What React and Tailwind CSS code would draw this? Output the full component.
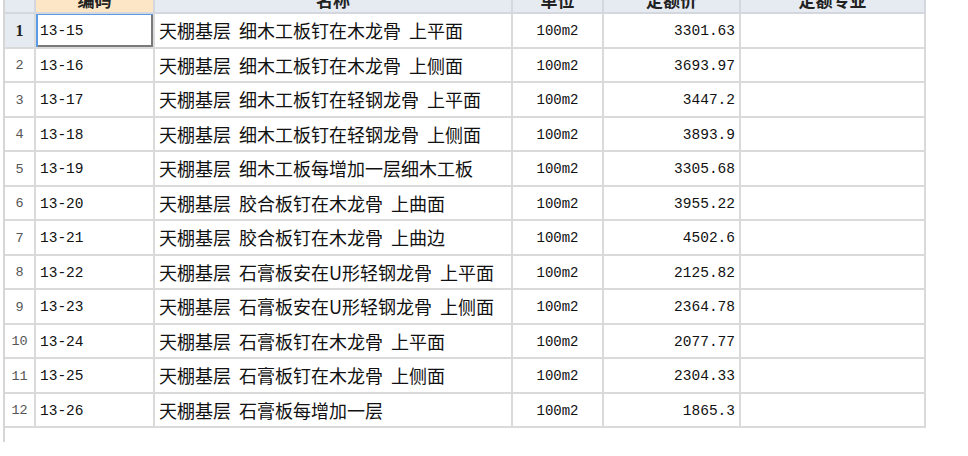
import React from "react";

const rows = [
  ["13-15", "天棚基层 细木工板钉在木龙骨 上平面", "100m2", "3301.63"],
  ["13-16", "天棚基层 细木工板钉在木龙骨 上侧面", "100m2", "3693.97"],
  ["13-17", "天棚基层 细木工板钉在轻钢龙骨 上平面", "100m2", "3447.2"],
  ["13-18", "天棚基层 细木工板钉在轻钢龙骨 上侧面", "100m2", "3893.9"],
  ["13-19", "天棚基层 细木工板每增加一层细木工板", "100m2", "3305.68"],
  ["13-20", "天棚基层 胶合板钉在木龙骨 上曲面", "100m2", "3955.22"],
  ["13-21", "天棚基层 胶合板钉在木龙骨 上曲边", "100m2", "4502.6"],
  ["13-22", "天棚基层 石膏板安在U形轻钢龙骨 上平面", "100m2", "2125.82"],
  ["13-23", "天棚基层 石膏板安在U形轻钢龙骨 上侧面", "100m2", "2364.78"],
  ["13-24", "天棚基层 石膏板钉在木龙骨 上平面", "100m2", "2077.77"],
  ["13-25", "天棚基层 石膏板钉在木龙骨 上侧面", "100m2", "2304.33"],
  ["13-26", "天棚基层 石膏板每增加一层", "100m2", "1865.3"],
];

const cjk = { fontFamily: '"Noto Sans CJK SC", sans-serif' };
const mono = { fontFamily: '"Liberation Mono", monospace' };

const App = () => {
  return (
    <div className="w-[968px] h-[456px] overflow-hidden bg-white pl-[3px]">
      <div className="h-full border-l-2 border-[#d6d6d6]">
        <div className="w-[921px] -mt-[14px]">
          {/* header, top half is scrolled out of view */}
          <div className="flex h-[28px] border-b-2 border-[#d4d8de] font-bold text-[17px] leading-none text-[#222]" style={cjk}>
            <div className="w-[31px] shrink-0 bg-[#e6ebf2] border-r-2 border-[#d4d8de]"></div>
            <div className="w-[119px] shrink-0 bg-[#fde6c6] border-r-2 border-[#d4d8de] flex items-center justify-center">编码</div>
            <div className="w-[358px] shrink-0 bg-[#e6ebf2] border-r-2 border-[#d4d8de] flex items-center justify-center">名称</div>
            <div className="w-[91px] shrink-0 bg-[#e6ebf2] border-r-2 border-[#d4d8de] flex items-center justify-center">单位</div>
            <div className="w-[137px] shrink-0 bg-[#e6ebf2] border-r-2 border-[#d4d8de] flex items-center justify-center">定额价</div>
            <div className="w-[185px] shrink-0 bg-[#e6ebf2] border-r-2 border-[#d4d8de] flex items-center justify-center">定额专业</div>
          </div>

          {rows.map((r, i) => (
            <div key={r[0]} className="flex h-[34.5px] border-b-2 border-[#dadada] text-[#111] leading-none">
              <div
                className={`w-[31px] shrink-0 border-r-2 border-[#dadada] flex items-center justify-center pt-[2px] ${
                  i === 0 ? "bg-[#e6ebf2] font-bold text-[#222] text-[16px]" : "text-[#555] text-[13.5px]"
                }`}
                style={i === 0 ? { fontFamily: '"Liberation Serif", serif' } : mono}
              >
                {i + 1}
              </div>
              <div
                className={`w-[119px] shrink-0 border-r-2 border-[#dadada] flex items-center pl-[4px] pt-[2px] text-[14.5px] ${
                  i === 0 ? "shadow-[inset_2px_1px_0_#5b9be6,inset_-2px_-2px_0_#7a7a7a]" : ""
                }`}
                style={mono}
              >
                {r[0]}
              </div>
              <div
                className="w-[358px] shrink-0 border-r-2 border-[#dadada] flex items-center pl-[4px] text-[18px] whitespace-nowrap [word-spacing:4px]"
                style={cjk}
              >
                {r[1]}
              </div>
              <div className="w-[91px] shrink-0 border-r-2 border-[#dadada] flex items-center justify-center pt-[2px] text-[14px]" style={mono}>
                {r[2]}
              </div>
              <div className="w-[137px] shrink-0 border-r-2 border-[#dadada] flex items-center justify-end pr-[4px] pt-[2px] text-[14.5px]" style={mono}>
                {r[3]}
              </div>
              <div className="w-[185px] shrink-0 border-r-2 border-[#dadada]"></div>
            </div>
          ))}
        </div>
      </div>
    </div>
  );
};

export default App;
